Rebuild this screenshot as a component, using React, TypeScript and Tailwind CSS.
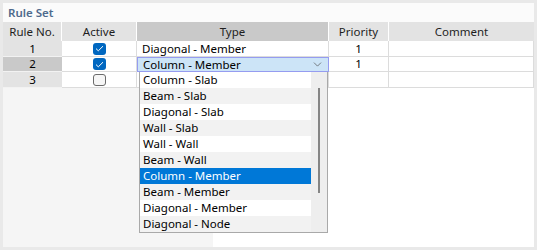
import { ChevronDown } from "lucide-react";

type Row = { no: number; active: boolean; type: string; priority: string; selected?: boolean };

const rows: Row[] = [
  { no: 1, active: true, type: "Diagonal - Member", priority: "1" },
  { no: 2, active: true, type: "Column - Member", priority: "1", selected: true },
  { no: 3, active: false, type: "", priority: "" },
];

const rowHeights = ["h-[16px]", "h-[15px]", "h-[16px]"];

const options = [
  "Column - Slab",
  "Beam - Slab",
  "Diagonal - Slab",
  "Wall - Slab",
  "Wall - Wall",
  "Beam - Wall",
  "Column - Member",
  "Beam - Member",
  "Diagonal - Member",
  "Diagonal - Node",
];

function Check({ checked }: { checked: boolean }) {
  if (!checked) {
    return <div className="h-[12px] w-[13px] rounded-[3px] border border-[#6b6b6b] bg-[#f6f6f6]" />;
  }
  return (
    <div className="flex h-[12px] w-[13px] items-center justify-center rounded-[3px] bg-[#0067c0]">
      <svg width="9" height="7" viewBox="0 0 9 7" fill="none">
        <path d="M1 3.6 L3.3 5.8 L8 1.2" stroke="white" strokeWidth="1" />
      </svg>
    </div>
  );
}

export default function App() {
  return (
    <div
      className="h-[250px] w-[537px] bg-[#e9e9e9] pl-[3px] pt-[3px] text-[11.5px] text-black"
      style={{ fontFamily: '"Segoe UI", "Noto Sans", sans-serif' }}
    >
      <div className="relative flex h-[244px] w-[531px] flex-col bg-white">
        <div className="flex h-[19px] items-center bg-[#fbfbfb] pl-[5px] font-semibold text-[#4f6b8d]">Rule Set</div>

        {/* header */}
        <div className="flex h-[19px] text-[#1e1e1e]">
          <div className="flex w-[59px] items-center justify-center border-r border-white bg-[#e3e3e3]">Rule No.</div>
          <div className="flex w-[75px] items-center justify-center border-r border-white bg-[#e3e3e3]">Active</div>
          <div className="flex w-[192px] items-center justify-center border-r border-white bg-[#c9c9c9]">Type</div>
          <div className="flex w-[60px] items-center justify-center border-r border-white bg-[#e3e3e3]">Priority</div>
          <div className="flex w-[145px] items-center justify-center bg-[#e3e3e3]">Comment</div>
        </div>

        {rows.map((r, i) => (
          <div key={r.no} className={`flex ${rowHeights[i]}`}>
            <div
              className={`flex w-[59px] items-center justify-center border-b border-[#f2f2f2] ${
                r.selected ? "bg-[#c9c9c9]" : "bg-[#e3e3e3]"
              }`}
            >
              {r.no}
            </div>
            <div className="flex w-[75px] items-center justify-center border-b border-r border-[#dcdcdc]">
              <Check checked={r.active} />
            </div>
            {r.selected ? (
              <div className="flex w-[192px] items-center justify-between border border-[#959cf0] bg-[#cce4f7] pl-[5px] pr-[4px]">
                <span>{r.type}</span>
                <ChevronDown size={13} strokeWidth={1.2} className="text-[#444]" />
              </div>
            ) : (
              <div className="flex w-[192px] items-center border-b border-r border-[#dcdcdc] pl-[5px]">{r.type}</div>
            )}
            <div className="flex w-[60px] items-center justify-center border-b border-r border-[#dcdcdc]">{r.priority}</div>
            <div className="w-[145px] border-b border-r border-[#dcdcdc]" />
          </div>
        ))}

        <div className="flex flex-1">
          <div className="w-[210px] bg-[#f5f5f5]" />
          <div className="flex-1 bg-white" />
        </div>

        {/* open dropdown list */}
        <div className="absolute left-[136px] top-[69px] flex w-[189px] border-x border-b border-[#a9a9a9] bg-white">
          <div className="flex w-[171px] flex-col">
            {options.map((o, i) => (
              <div
                key={o}
                className={`flex h-[16px] items-center pl-[3px] ${
                  o === "Column - Member"
                    ? "bg-[#0078d7] text-white"
                    : i % 2 === 1
                    ? "bg-[#f2f2f2]"
                    : "bg-white"
                }`}
              >
                {o}
              </div>
            ))}
          </div>
          <div className="relative w-[16px] bg-[#eeeeee]">
            <div className="absolute left-[7px] top-[16px] h-[105px] w-[2px] bg-[#858585]" />
          </div>
        </div>
      </div>
    </div>
  );
}
